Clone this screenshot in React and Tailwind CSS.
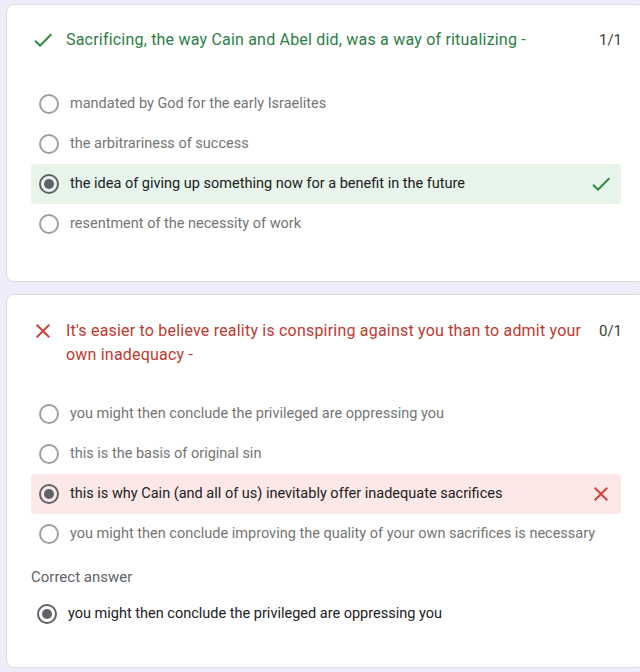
import React from "react";

const quiz = [
  {
    title: "Sacrificing, the way Cain and Abel did, was a way of ritualizing -",
    score: "1/1",
    correct: true,
    options: [
      "mandated by God for the early Israelites",
      "the arbitrariness of success",
      "the idea of giving up something now for a benefit in the future",
      "resentment of the necessity of work",
    ],
    picked: 2,
  },
  {
    title:
      "It's easier to believe reality is conspiring against you than to admit your own inadequacy -",
    score: "0/1",
    correct: false,
    options: [
      "you might then conclude the privileged are oppressing you",
      "this is the basis of original sin",
      "this is why Cain (and all of us) inevitably offer inadequate sacrifices",
      "you might then conclude improving the quality of your own sacrifices is necessary",
    ],
    picked: 2,
    answer: "you might then conclude the privileged are oppressing you",
  },
];

const CheckIcon = ({ className }) => (
  <svg viewBox="0 0 24 24" className={className} fill="currentColor">
    <path d="M9 16.17L4.83 12l-1.42 1.41L9 19 21 7l-1.41-1.41z" />
  </svg>
);

const CrossIcon = ({ className }) => (
  <svg viewBox="0 0 24 24" className={className} fill="currentColor">
    <path d="M19 6.41L17.59 5 12 10.59 6.41 5 5 6.41 10.59 12 5 17.59 6.41 19 12 13.41 17.59 19 19 17.59 13.41 12z" />
  </svg>
);

const Radio = ({ on }) => (
  <div
    className={`w-5 h-5 shrink-0 rounded-full border-2 flex items-center justify-center ${
      on ? "border-[#5f6368]" : "border-[#9aa0a6]"
    }`}
  >
    {on && <div className="w-[10px] h-[10px] rounded-full bg-[#5f6368]" />}
  </div>
);

const Option = ({ text, picked, correct }) => {
  // picked row gets a green or red band
  let bg = "";
  if (picked) bg = correct ? "bg-[#e6f4ea]" : "bg-[#fce8e6]";
  return (
    <div className={`h-10 flex items-center rounded px-2 ${bg}`}>
      <Radio on={picked} />
      <span
        className={`ml-[11px] flex-1 text-[14.5px] ${
          picked ? "text-[#202124]" : "text-[#757575]"
        }`}
      >
        {text}
      </span>
      {picked &&
        (correct ? (
          <CheckIcon className="w-6 h-6 text-[#2b8a3e]" />
        ) : (
          <CrossIcon className="w-6 h-6 text-[#d3413a]" />
        ))}
    </div>
  );
};

const Card = ({ q, first }) => (
  <div
    className={`w-[640px] ml-[6px] bg-white border border-[#dadce0] rounded-lg px-6 ${
      first ? "mt-[3px] pt-[23px] pb-[37px]" : "mt-[12px] pt-[24px] pb-[33px]"
    }`}
  >
    <div className="flex items-start">
      {q.correct ? (
        <CheckIcon className="w-6 h-6 shrink-0 text-[#2b8a3e]" />
      ) : (
        <CrossIcon className="w-6 h-6 shrink-0 text-[#d3413a]" />
      )}
      <div
        className={`ml-[11px] flex-1 text-[16px] leading-6 tracking-[0.2px] ${
          q.correct ? "text-[#2d7d46]" : "text-[#c0392f]"
        }`}
      >
        {q.title}
      </div>
      <div className="w-[38px] pl-[16px] text-[15px] leading-6 text-[#3c4043]">{q.score}</div>
    </div>

    <div className={first ? "mt-[32px]" : "mt-[27px]"}>
      {q.options.map((o, i) => (
        <Option key={i} text={o} picked={i === q.picked} correct={q.correct} />
      ))}
    </div>

    {q.answer && (
      <>
        <div className="mt-[13px] text-[15px] leading-5 text-[#5f6368]">Correct answer</div>
        <div className="mt-[7px] h-10 flex items-center px-[6px]">
          <Radio on />
          <span className="ml-[11px] text-[14.5px] text-[#202124]">{q.answer}</span>
        </div>
      </>
    )}
  </div>
);

const App = () => {
  return (
    <div className="w-[640px] h-[672px] overflow-hidden bg-[#f0ebf8] font-['Roboto',sans-serif] pt-px">
      {quiz.map((q, i) => (
        <Card key={i} q={q} first={i === 0} />
      ))}
    </div>
  );
};

export default App;
